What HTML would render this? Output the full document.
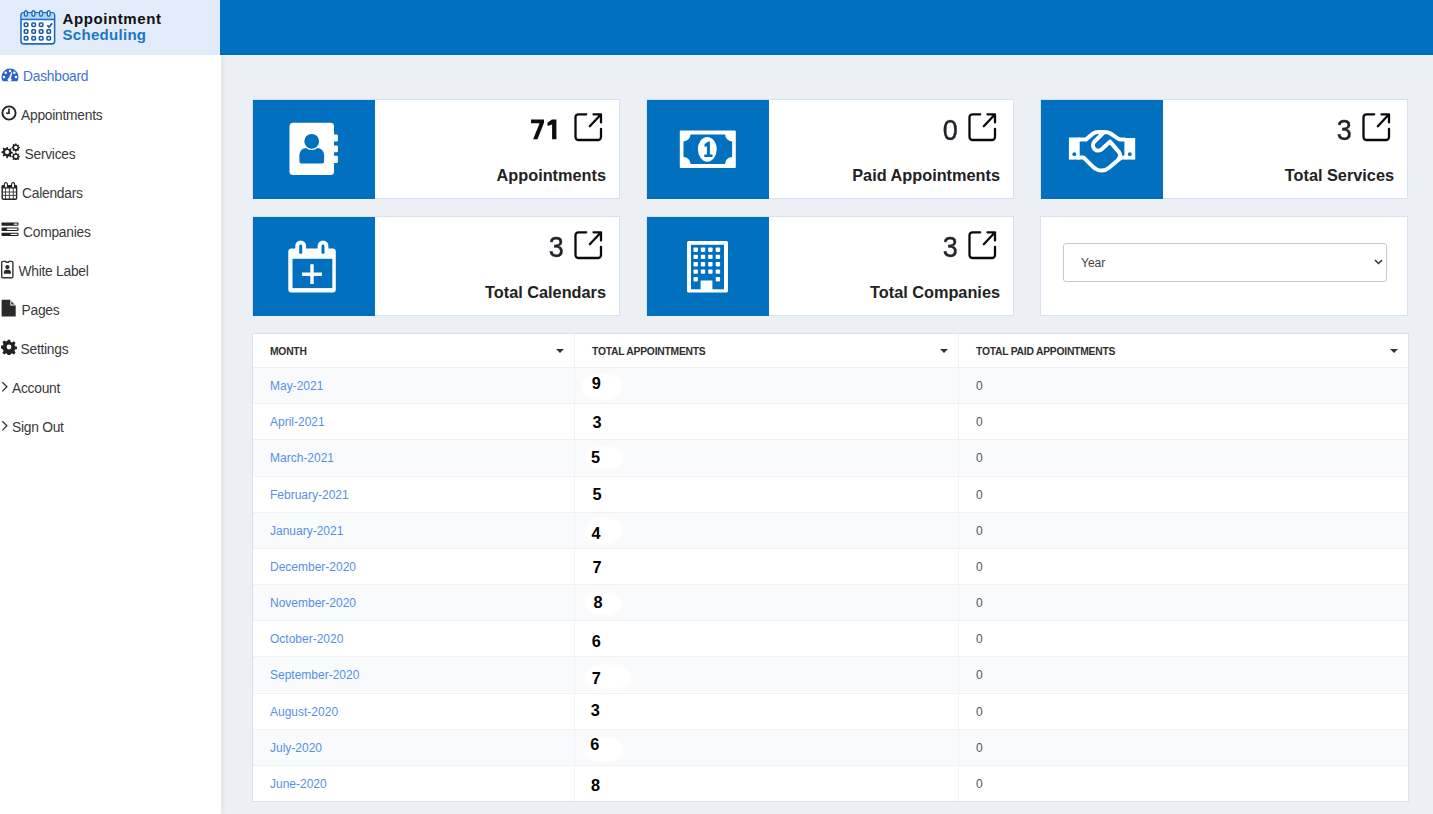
<!DOCTYPE html>
<html>
<head>
<meta charset="utf-8">
<style>
*{box-sizing:border-box;margin:0;padding:0}
html,body{width:1433px;height:814px;overflow:hidden}
body{position:relative;background:#eceff4;font-family:"Liberation Sans",sans-serif;}
.abs{position:absolute}
#side{left:0;top:0;width:221px;height:814px;background:#fff;box-shadow:2px 0 5px rgba(0,0,0,.06)}
#logo{left:0;top:0;width:220px;height:55px;background:#e2ebfa}
#topbar{left:220px;top:0;width:1213px;height:55px;background:#0070bf}
.nav{position:absolute;left:0;font-size:13.8px;color:#3a3a3a;white-space:nowrap;line-height:16px;letter-spacing:-.25px}
.nav svg{position:absolute}
.card{position:absolute;width:368px;height:100px;background:#fff;border:1px solid #d7e1f5}
.card .sq{position:absolute;left:0;top:0;width:122px;height:99px;background:#0070bf}
.card .num{position:absolute;font-size:30px;line-height:30px;color:#20242a;white-space:nowrap;-webkit-text-stroke:.4px #20242a;transform:scaleX(.9);transform-origin:100% 50%}
.card .lbl{position:absolute;font-size:16.3px;font-weight:bold;color:#222;white-space:nowrap;line-height:20px}
.card .ext{position:absolute}
#tbl{left:252px;top:333px;width:1157px;height:469px;background:#fff;border:1px solid #d7e1f5}
.th{position:absolute;top:11.5px;font-size:10.3px;font-weight:bold;color:#2e2e2e;white-space:nowrap;letter-spacing:-.22px}
.row{position:absolute;left:0;width:1155px;height:36px;border-top:1px solid #eff1f5}
.row.odd{background:#f9fafc}
.mo{position:absolute;left:17px;font-size:12px;color:#5690e6;white-space:nowrap}
.zero{position:absolute;left:723px;font-size:12px;color:#555;white-space:nowrap}
.dig{position:absolute;font-size:16.3px;font-weight:bold;color:#000;line-height:16px}
.blob{position:absolute;background:#fff;border-radius:50%;filter:blur(1.5px)}
.vline{position:absolute;top:0;width:1px;height:467px;background:#f0f2f6}
</style>
</head>
<body>
<div id="side" class="abs"></div>
<div id="logo" class="abs">
  <svg class="abs" style="left:20px;top:10px" width="36" height="36" viewBox="0 0 36 36">
    <rect x="1" y="2.7" width="33.6" height="31.2" rx="2.6" fill="#fff" stroke="#1e6cbf" stroke-width="1.6"/>
    <path d="M1.8 3.5h32v5.6h-32z" fill="#a6d8f7"/>
    <line x1="1" y1="9.6" x2="34.6" y2="9.6" stroke="#1e6cbf" stroke-width="1.5"/>
    <g fill="#fff" stroke="#1e6cbf" stroke-width="1.4">
      <rect x="4.5" y="0.8" width="2.8" height="5.4" rx="1.4"/><rect x="12" y="0.8" width="2.8" height="5.4" rx="1.4"/>
      <rect x="19.6" y="0.8" width="2.8" height="5.4" rx="1.4"/><rect x="27.3" y="0.8" width="2.8" height="5.4" rx="1.4"/>
    </g>
    <g fill="none" stroke="#1a5aab" stroke-width="1.6"><rect x="4.3" y="13.0" width="3.5" height="3.5" rx=".9"/><rect x="11.9" y="13.0" width="3.5" height="3.5" rx=".9"/><rect x="19.4" y="13.0" width="3.5" height="3.5" rx=".9"/><rect x="4.3" y="19.7" width="3.5" height="3.5" rx=".9"/><rect x="11.9" y="19.7" width="3.5" height="3.5" rx=".9"/><rect x="19.4" y="19.7" width="3.5" height="3.5" rx=".9"/><rect x="27.0" y="19.7" width="3.5" height="3.5" rx=".9"/><rect x="4.3" y="26.5" width="3.5" height="3.5" rx=".9"/><rect x="11.9" y="26.5" width="3.5" height="3.5" rx=".9"/><rect x="19.4" y="26.5" width="3.5" height="3.5" rx=".9"/><rect x="27.0" y="26.5" width="3.5" height="3.5" rx=".9"/><path d="M27.3 15.2l1.7 1.9l3.2-3.9" stroke-width="1.7"/></g>
  </svg>
  <div class="abs" style="left:62.5px;top:11px;font-size:15px;font-weight:bold;color:#111;line-height:16px;white-space:nowrap;letter-spacing:.6px">Appointment</div>
  <div class="abs" style="left:62.5px;top:27px;font-size:15px;font-weight:bold;color:#1a78c2;line-height:16px;white-space:nowrap;letter-spacing:.3px">Scheduling</div>
</div>
<div id="topbar" class="abs"></div>

<!-- NAV -->
<div class="nav" style="top:67px;left:0;width:200px;height:18px;color:#3f73d0">
  <svg style="left:1px;top:1px" width="18" height="14" viewBox="0 0 18 14"><path d="M9 0.5A8.5 8.5 0 0 0 0.5 9c0 1.6.4 3 1.2 4.3h14.6c.8-1.3 1.2-2.7 1.2-4.3A8.5 8.5 0 0 0 9 0.5z" fill="#2f62c7"/><g fill="#fff"><circle cx="9" cy="2.9" r="1.25"/><circle cx="4.7" cy="4.7" r="1.25"/><circle cx="13.3" cy="4.7" r="1.25"/><circle cx="3" cy="9" r="1.25"/><circle cx="15" cy="9" r="1.25"/><path d="M11.4 4.6l-1.6 5.6a1.9 1.9 0 1 1-1.9-.3l2.5-5.6z"/></g></svg>
  <span class="abs" style="left:23px;top:2px">Dashboard</span>
</div>

<div class="nav" style="top:106px">
  <svg style="left:1px;top:-1px" width="16" height="16" viewBox="0 0 16 16"><circle cx="8" cy="8" r="6.6" fill="none" stroke="#222" stroke-width="1.9"/><path d="M8 3.6V8.3H5" fill="none" stroke="#222" stroke-width="1.6"/></svg>
  <span class="abs" style="left:21px;top:2px">Appointments</span>
</div>
<div class="nav" style="top:145px">
  <svg style="left:0px;top:-2px" width="20" height="17" viewBox="0 0 20 17"><g fill="#222"><path d="M6.5 4.2l1.2-.1.5 1.6 1 .4 1.4-.9 1 .9-.8 1.5.4 1 1.6.4v1.4l-1.6.4-.4 1 .8 1.5-1 .9-1.4-.9-1 .4-.5 1.6H6.5L6 13.1l-1-.4-1.4.9-1-.9.8-1.5-.4-1L1.4 9.8V8.4L3 8l.4-1-.8-1.5 1-.9 1.4.9 1-.4z"/></g><circle cx="7.1" cy="9.1" r="2.1" fill="#fff"/><g fill="#222"><path d="M15.2 0.6h1.2l.3 1 .7.3.9-.5.8.8-.5.9.3.7 1 .3v1.2l-1 .3-.3.7.5.9-.8.8-.9-.5-.7.3-.3 1h-1.2l-.3-1-.7-.3-.9.5-.8-.8.5-.9-.3-.7-1-.3V3.8l1-.3.3-.7-.5-.9.8-.8.9.5.7-.3z"/><path d="M15.2 9.6h1.2l.3 1 .7.3.9-.5.8.8-.5.9.3.7 1 .3v1.2l-1 .3-.3.7.5.9-.8.8-.9-.5-.7.3-.3 1h-1.2l-.3-1-.7-.3-.9.5-.8-.8.5-.9-.3-.7-1-.3v-1.2l1-.3.3-.7-.5-.9.8-.8.9.5.7-.3z"/></g><circle cx="15.8" cy="4.4" r="1.7" fill="#fff"/><circle cx="15.8" cy="13.4" r="1.7" fill="#fff"/></svg>
  <span class="abs" style="left:24.5px;top:2px">Services</span>
</div>
<div class="nav" style="top:184px">
  <svg style="left:0px;top:-6px" width="20" height="24" viewBox="0 0 20 24"><rect x="2.2" y="7.6" width="14.4" height="13.6" rx="1.2" fill="#fff" stroke="#222" stroke-width="1.4"/><rect x="1.8" y="7.2" width="15.2" height="3.2" fill="#222"/><g stroke="#333" stroke-width="0.9"><line x1="2" y1="14" x2="16.8" y2="14"/><line x1="2" y1="17.4" x2="16.8" y2="17.4"/><line x1="5.5" y1="10" x2="5.5" y2="21"/><line x1="9.35" y1="10" x2="9.35" y2="21"/><line x1="13.3" y1="10" x2="13.3" y2="21"/></g><rect x="4.4" y="4.6" width="3" height="5.4" rx="1.5" fill="#fff" stroke="#222" stroke-width="1.1"/><rect x="11.6" y="4.6" width="3" height="5.4" rx="1.5" fill="#fff" stroke="#222" stroke-width="1.1"/></svg>
  <span class="abs" style="left:22px;top:2px">Calendars</span>
</div>
<div class="nav" style="top:223px">
  <svg style="left:1px;top:-1px" width="18" height="15" viewBox="0 0 18 15"><g fill="#222"><rect x="0.5" y="0.5" width="17" height="3.3" rx=".8"/><rect x="0.5" y="5.6" width="17" height="3.3" rx=".8"/><rect x="0.5" y="10.7" width="17" height="3.3" rx=".8"/></g><g fill="#fff"><rect x="12.8" y="1.5" width="3.7" height="1.3" rx=".6"/><rect x="5.8" y="6.6" width="10.7" height="1.3" rx=".6"/><rect x="9.5" y="11.7" width="7" height="1.3" rx=".6"/></g></svg>
  <span class="abs" style="left:23px;top:2px">Companies</span>
</div>
<div class="nav" style="top:262px">
  <svg style="left:1px;top:-2px" width="14" height="19" viewBox="0 0 14 19"><path d="M1.9 1.4H4.6L5.2 2.2H7.4L8 1.4H10.7A1.2 1.2 0 0 1 11.9 2.6V16.5A1.2 1.2 0 0 1 10.7 17.7H1.9A1.2 1.2 0 0 1 .7 16.5V2.6A1.2 1.2 0 0 1 1.9 1.4z" fill="none" stroke="#333" stroke-width="1.4"/><circle cx="6.4" cy="7.1" r="2.1" fill="#2a2a2a"/><path d="M2.9 13.8V12.3C2.9 10.7 4 9.8 5.2 9.8H7.6C8.8 9.8 9.9 10.7 9.9 12.3V13.8z" fill="#2a2a2a"/></svg>
  <span class="abs" style="left:18.5px;top:2px">White Label</span>
</div>
<div class="nav" style="top:301px">
  <svg style="left:1px;top:-2px" width="16" height="19" viewBox="0 0 16 19"><path d="M0.6 0.7H9.3L14.7 6.6V17.6H0.6z" fill="#2a2a2a"/><path d="M9.3 0.7V6.6H14.7z" fill="#fff"/><path d="M10.3 2.3V5.6H13.3z" fill="#2a2a2a"/></svg>
  <span class="abs" style="left:21.5px;top:2px">Pages</span>
</div>
<div class="nav" style="top:340px">
  <svg style="left:1px;top:-1px" width="16" height="16" viewBox="0 0 16 16"><path fill="#222" d="M6.8.8h2.4l.5 2.1 1.3.55 1.85-1.1 1.7 1.7-1.1 1.85.55 1.3 2.1.5v2.4l-2.1.5-.55 1.3 1.1 1.85-1.7 1.7-1.85-1.1-1.3.55-.5 2.1H6.8l-.5-2.1-1.3-.55-1.85 1.1-1.7-1.7 1.1-1.85-.55-1.3L-.1 9.2V6.8l2.1-.5.55-1.3-1.1-1.85 1.7-1.7 1.85 1.1 1.3-.55z"/><circle cx="8" cy="8" r="2.4" fill="#fff"/></svg>
  <span class="abs" style="left:20.5px;top:2px">Settings</span>
</div>
<div class="nav" style="top:379px">
  <svg style="left:1px;top:2px" width="8" height="12" viewBox="0 0 8 12"><path d="M1.3 1.2l4.6 4.6-4.6 4.6" fill="none" stroke="#333" stroke-width="1.3"/></svg>
  <span class="abs" style="left:12px;top:2px">Account</span>
</div>
<div class="nav" style="top:418px">
  <svg style="left:1px;top:2px" width="8" height="12" viewBox="0 0 8 12"><path d="M1.3 1.2l4.6 4.6-4.6 4.6" fill="none" stroke="#333" stroke-width="1.3"/></svg>
  <span class="abs" style="left:12px;top:2px">Sign Out</span>
</div>
<div class="card" style="left:252px;top:99px"><div class="sq"><svg class="abs" style="left:36px;top:22px" width="50" height="54" viewBox="0 0 50 54"><rect x="0.5" y="0.8" width="44.5" height="52.2" rx="3.5" fill="#fff"/><rect x="44" y="12.4" width="4.9" height="7.2" rx="1" fill="#fff"/><rect x="44" y="23.4" width="4.9" height="6.9" rx="1" fill="#fff"/><rect x="44" y="33.7" width="4.9" height="7.3" rx="1" fill="#fff"/><path d="M10.4 41.6V33.5C10.4 29 13.3 26 17.6 26H27.9C32.2 26 35.1 29 35.1 33.5V39.6A2 2 0 0 1 33.1 41.6H12.4A2 2 0 0 1 10.4 39.6z" fill="#0070bf"/><circle cx="22.7" cy="19.3" r="8.8" fill="#fff"/><circle cx="22.7" cy="19.3" r="7.4" fill="#0070bf"/></svg></div>
  <svg class="abs" style="left:277px;top:18px" width="30" height="23" viewBox="0 0 30 23"><path fill="#0d0d0d" d="M1 1.4H14V4.7L7.5 21.2H3.1L9.6 5.3H1z"/><path fill="#0d0d0d" d="M26.4 1.4V21.2H22.1V6.6L17.5 8.1V4.8L21.9 1.4z"/></svg>
  <svg class="ext" style="right:16px;top:12px" width="30" height="30" viewBox="0 0 30 30"><g fill="none" stroke="#0a0a0a" stroke-width="2.3" stroke-linecap="round" stroke-linejoin="round"><path d="M13.2 2.3H5.5A3 3 0 0 0 2.5 5.3V25A3 3 0 0 0 5.5 28H25A3 3 0 0 0 28 25V17"/><path d="M16.8 14.2L27.6 2.7M20.5 2.3H28V10.4"/></g></svg>
  <div class="lbl" style="right:13px;top:65px">Appointments</div>
</div>
<div class="card" style="left:646px;top:99px"><div class="sq"><svg class="abs" style="left:32px;top:30px" width="58" height="39" viewBox="0 0 58 39"><rect x="0.8" y="0.5" width="56" height="37.5" rx="1" fill="#fff"/><path d="M11.5 4.4h34.6a7 7 0 0 0 7 7v15.6a7 7 0 0 0-7 7H11.5a7 7 0 0 0-7-7V11.4a7 7 0 0 0 7-7z" fill="#0070bf"/><ellipse cx="28.3" cy="19.3" rx="9.4" ry="12.4" fill="#fff"/><path d="M25.5 14.2l3.7-2.6h1.7v12.8h2.6v2.5h-8.2v-2.5h2.6v-8.4l-2.1 1.4z" fill="#0070bf"/></svg></div>
  <div class="num" style="right:55px;top:14.5px;">0</div>
  <svg class="ext" style="right:16px;top:12px" width="30" height="30" viewBox="0 0 30 30"><g fill="none" stroke="#0a0a0a" stroke-width="2.3" stroke-linecap="round" stroke-linejoin="round"><path d="M13.2 2.3H5.5A3 3 0 0 0 2.5 5.3V25A3 3 0 0 0 5.5 28H25A3 3 0 0 0 28 25V17"/><path d="M16.8 14.2L27.6 2.7M20.5 2.3H28V10.4"/></g></svg>
  <div class="lbl" style="right:13px;top:65px">Paid Appointments</div>
</div>
<div class="card" style="left:1040px;top:99px"><div class="sq"><svg class="abs" style="left:25px;top:28px" width="72" height="48" viewBox="0 0 72 48"><g fill="#fff"><rect x="2.9" y="9.5" width="10.8" height="22.1"/><rect x="58.4" y="10" width="10.8" height="21.6"/></g><circle cx="8.3" cy="26.2" r="1.9" fill="#0070bf"/><circle cx="63.8" cy="26.2" r="1.9" fill="#0070bf"/><g fill="none" stroke="#fff" stroke-width="4" stroke-linejoin="round" stroke-linecap="round"><path d="M13 11.6H19.8L27 5.6C29 4 31 3.9 33 3.9H38.6C40.6 3.9 42.6 4.3 44.6 5.5L51.6 10.3C52.6 11 53.5 11.6 55 11.6H58.5"/><path d="M38 4.3L28.5 13.5C26.3 15.7 26.5 19.3 28.6 21.2C30.7 23.1 34 23 36 21L44 13.6L53.2 24.4C54.8 26.4 54.4 29 52.7 30.6"/><path d="M13 29.4H17.5L26.5 38.4C29 40.9 32.3 42.6 35.8 42.6C38.6 42.6 41 41.5 43 39.8L52.7 31.5C54 30.2 55 29.4 56.8 29.4H58.5"/></g></svg></div>
  <div class="num" style="right:55px;top:14.5px;">3</div>
  <svg class="ext" style="right:16px;top:12px" width="30" height="30" viewBox="0 0 30 30"><g fill="none" stroke="#0a0a0a" stroke-width="2.3" stroke-linecap="round" stroke-linejoin="round"><path d="M13.2 2.3H5.5A3 3 0 0 0 2.5 5.3V25A3 3 0 0 0 5.5 28H25A3 3 0 0 0 28 25V17"/><path d="M16.8 14.2L27.6 2.7M20.5 2.3H28V10.4"/></g></svg>
  <div class="lbl" style="right:13px;top:65px">Total Services</div>
</div>
<div class="card" style="left:252px;top:216px"><div class="sq"><svg class="abs" style="left:35px;top:23px" width="50" height="54" viewBox="0 0 50 54"><path d="M3 8.5h41.5a3.3 3.3 0 0 1 3.3 3.3v37.8a3 3 0 0 1-3 3H3.3a3 3 0 0 1-3-3V11.8A3.3 3.3 0 0 1 3 8.5z" fill="#fff"/><rect x="4.5" y="18.8" width="39.8" height="29.3" fill="#0070bf"/><rect x="7.3" y="0.5" width="10.8" height="15.3" rx="5.4" fill="#fff"/><rect x="29.6" y="0.5" width="10.8" height="15.3" rx="5.4" fill="#fff"/><rect x="11.2" y="4.5" width="3" height="9.5" rx="1.4" fill="#0070bf"/><rect x="33.5" y="4.5" width="3" height="9.5" rx="1.4" fill="#0070bf"/><path d="M22.3 24.3h3.4v8.2h8.2v3.4h-8.2v8.2h-3.4v-8.2h-8.2v-3.4h8.2z" fill="#fff"/></svg></div>
  <div class="num" style="right:55px;top:15px;">3</div>
  <svg class="ext" style="right:16px;top:13px" width="30" height="30" viewBox="0 0 30 30"><g fill="none" stroke="#0a0a0a" stroke-width="2.3" stroke-linecap="round" stroke-linejoin="round"><path d="M13.2 2.3H5.5A3 3 0 0 0 2.5 5.3V25A3 3 0 0 0 5.5 28H25A3 3 0 0 0 28 25V17"/><path d="M16.8 14.2L27.6 2.7M20.5 2.3H28V10.4"/></g></svg>
  <div class="lbl" style="right:13px;top:65px">Total Calendars</div>
</div>
<div class="card" style="left:646px;top:216px"><div class="sq"><svg class="abs" style="left:39px;top:23px" width="44" height="54" viewBox="0 0 44 54"><path d="M1 2.5a1.6 1.6 0 0 1 1.6-1.6h37.8a1.6 1.6 0 0 1 1.6 1.6V51a1.6 1.6 0 0 1-1.6 1.6H2.6A1.6 1.6 0 0 1 1 51z" fill="#fff"/><rect x="5" y="4.8" width="33" height="44.5" fill="#0070bf"/><g fill="#fff"><rect x="7.5" y="7.5" width="4.4" height="4.4" rx=".8"/><rect x="14.8" y="7.5" width="4.4" height="4.4" rx=".8"/><rect x="22.2" y="7.5" width="4.4" height="4.4" rx=".8"/><rect x="29.7" y="7.5" width="4.4" height="4.4" rx=".8"/><rect x="7.5" y="14.7" width="4.4" height="4.4" rx=".8"/><rect x="14.8" y="14.7" width="4.4" height="4.4" rx=".8"/><rect x="22.2" y="14.7" width="4.4" height="4.4" rx=".8"/><rect x="29.7" y="14.7" width="4.4" height="4.4" rx=".8"/><rect x="7.5" y="22" width="4.4" height="4.4" rx=".8"/><rect x="14.8" y="22" width="4.4" height="4.4" rx=".8"/><rect x="22.2" y="22" width="4.4" height="4.4" rx=".8"/><rect x="29.7" y="22" width="4.4" height="4.4" rx=".8"/><rect x="7.5" y="29.4" width="4.4" height="4.4" rx=".8"/><rect x="14.8" y="29.4" width="4.4" height="4.4" rx=".8"/><rect x="22.2" y="29.4" width="4.4" height="4.4" rx=".8"/><rect x="29.7" y="29.4" width="4.4" height="4.4" rx=".8"/><rect x="7.5" y="37" width="4.4" height="4.4" rx=".8"/><rect x="29.7" y="37" width="4.4" height="4.4" rx=".8"/><rect x="14.6" y="40.5" width="11.8" height="10"/></g></svg></div>
  <div class="num" style="right:55px;top:15px;">3</div>
  <svg class="ext" style="right:16px;top:13px" width="30" height="30" viewBox="0 0 30 30"><g fill="none" stroke="#0a0a0a" stroke-width="2.3" stroke-linecap="round" stroke-linejoin="round"><path d="M13.2 2.3H5.5A3 3 0 0 0 2.5 5.3V25A3 3 0 0 0 5.5 28H25A3 3 0 0 0 28 25V17"/><path d="M16.8 14.2L27.6 2.7M20.5 2.3H28V10.4"/></g></svg>
  <div class="lbl" style="right:13px;top:65px">Total Companies</div>
</div>
<div class="card" style="left:1040px;top:216px">
  <div class="abs" style="left:22px;top:26px;width:324px;height:39px;border:1px solid #c9c9c9;border-radius:3px;background:#fff"></div>
  <div class="abs" style="left:40px;top:39px;font-size:12px;color:#444">Year</div>
  <svg class="abs" style="left:333px;top:42px" width="9" height="6" viewBox="0 0 9 6"><path d="M1 1l3.5 3.5L8 1" fill="none" stroke="#333" stroke-width="1.5"/></svg>
</div>
<div id="tbl" class="abs">
<div class="th" style="left:17px">MONTH</div><div class="th" style="left:339px">TOTAL APPOINTMENTS</div><div class="th" style="left:723px">TOTAL PAID APPOINTMENTS</div>
<svg class="abs" style="left:303px;top:15px" width="8" height="5" viewBox="0 0 8 5"><path d="M0 0h8L4 4z" fill="#333"/></svg><svg class="abs" style="left:687px;top:15px" width="8" height="5" viewBox="0 0 8 5"><path d="M0 0h8L4 4z" fill="#333"/></svg><svg class="abs" style="left:1137px;top:15px" width="8" height="5" viewBox="0 0 8 5"><path d="M0 0h8L4 4z" fill="#333"/></svg><div class="row odd" style="top:33.00px"><div class="mo" style="top:11px">May-2021</div><div class="zero" style="top:11px">0</div></div>
<div class="row" style="top:69.17px"><div class="mo" style="top:11px">April-2021</div><div class="zero" style="top:11px">0</div></div>
<div class="row odd" style="top:105.34px"><div class="mo" style="top:11px">March-2021</div><div class="zero" style="top:11px">0</div></div>
<div class="row" style="top:141.51px"><div class="mo" style="top:11px">February-2021</div><div class="zero" style="top:11px">0</div></div>
<div class="row odd" style="top:177.68px"><div class="mo" style="top:11px">January-2021</div><div class="zero" style="top:11px">0</div></div>
<div class="row" style="top:213.85px"><div class="mo" style="top:11px">December-2020</div><div class="zero" style="top:11px">0</div></div>
<div class="row odd" style="top:250.02px"><div class="mo" style="top:11px">November-2020</div><div class="zero" style="top:11px">0</div></div>
<div class="row" style="top:286.19px"><div class="mo" style="top:11px">October-2020</div><div class="zero" style="top:11px">0</div></div>
<div class="row odd" style="top:322.36px"><div class="mo" style="top:11px">September-2020</div><div class="zero" style="top:11px">0</div></div>
<div class="row" style="top:358.53px"><div class="mo" style="top:11px">August-2020</div><div class="zero" style="top:11px">0</div></div>
<div class="row odd" style="top:394.70px"><div class="mo" style="top:11px">July-2020</div><div class="zero" style="top:11px">0</div></div>
<div class="row" style="top:430.87px"><div class="mo" style="top:11px">June-2020</div><div class="zero" style="top:11px">0</div></div>
<div class="blob" style="left:328.0px;top:38.8px;width:41.0px;height:27.0px"></div>
<div class="blob" style="left:331.5px;top:111.7px;width:39.1px;height:23.7px"></div>
<div class="blob" style="left:331.5px;top:182.5px;width:37.5px;height:27.1px"></div>
<div class="blob" style="left:332.0px;top:256.7px;width:36.6px;height:24.3px"></div>
<div class="blob" style="left:330.8px;top:330.4px;width:47.2px;height:25.6px"></div>
<div class="blob" style="left:331.5px;top:402.6px;width:39.1px;height:25.7px"></div>
<div class="dig" style="left:338.8px;top:41.1px">9</div>
<div class="dig" style="left:339.4px;top:79.9px">3</div>
<div class="dig" style="left:338.1px;top:115.0px">5</div>
<div class="dig" style="left:339.4px;top:152.4px">5</div>
<div class="dig" style="left:338.5px;top:191.0px">4</div>
<div class="dig" style="left:339.4px;top:224.5px">7</div>
<div class="dig" style="left:340.4px;top:260.4px">8</div>
<div class="dig" style="left:338.8px;top:299.3px">6</div>
<div class="dig" style="left:338.8px;top:336.1px">7</div>
<div class="dig" style="left:337.7px;top:368.4px">3</div>
<div class="dig" style="left:337.2px;top:402.2px">6</div>
<div class="dig" style="left:338.1px;top:443.2px">8</div>
<div class="vline" style="left:321px"></div><div class="vline" style="left:705px"></div>
</div>
</body>
</html>
